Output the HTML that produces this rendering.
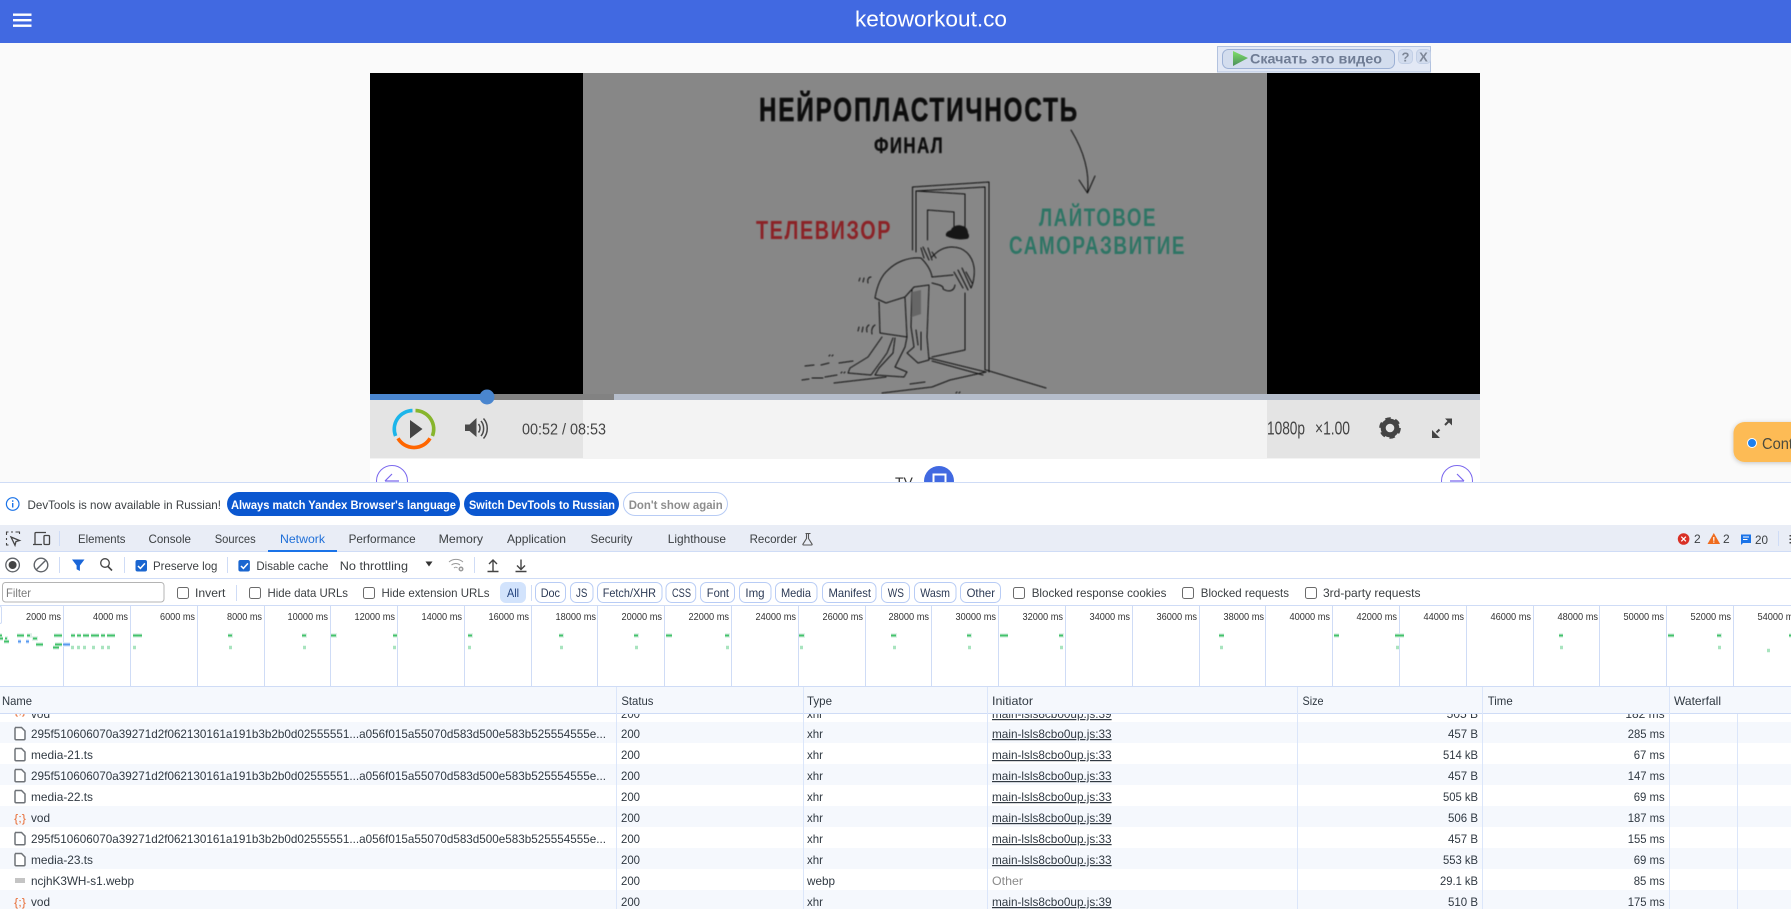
<!DOCTYPE html>
<html><head><meta charset="utf-8"><title>ketoworkout.co</title>
<style>
html,body{margin:0;padding:0;background:#fafafa;width:1791px;height:909px;overflow:hidden}
svg{position:absolute;left:0;top:0;display:block;font-family:"Liberation Sans","Noto Sans CJK JP",sans-serif}
.d{font-size:12px;fill:#3c4043}
.r{font-size:12px;fill:#303942}
.u{font-size:12px;fill:#303942;text-decoration:underline}
.e{text-anchor:end}
.b{font-size:12px;font-weight:bold;fill:#fff}
.c{font-size:12px;fill:#2c3a55}
.m{font-size:10.5px;fill:#333;text-anchor:end}
.g{shape-rendering:crispEdges}
.v{font-family:"Liberation Sans Narrow","Liberation Sans",sans-serif;font-weight:bold;letter-spacing:.08em}
</style></head><body>
<svg width="1791" height="909" viewBox="0 0 1791 909" xmlns="http://www.w3.org/2000/svg">
<defs>
<clipPath id="tb"><rect x="0" y="713" width="1791" height="196"/></clipPath>
<filter id="sh" x="-30%" y="-30%" width="160%" height="160%"><feDropShadow dx="0" dy="1" stdDeviation="2.5" flood-color="#000" flood-opacity=".22"/></filter>
<filter id="bl" x="-5%" y="-5%" width="110%" height="110%"><feGaussianBlur stdDeviation=".4"/></filter>
<linearGradient id="pl" x1="0" y1="0" x2="0" y2="1"><stop offset="0" stop-color="#7fe06a"/><stop offset="1" stop-color="#4b8f5a"/></linearGradient>
<path id="f" d="M0 0h6.5l3.5 3.5v7.5a1.2 1.2 0 0 1-1.2 1.2H1.2A1.2 1.2 0 0 1 0 11V1.2A1.2 1.2 0 0 1 1.2 0z" fill="#fff" stroke="#6f7378" stroke-width="1.5"/>
</defs>

<!-- page -->
<rect width="1791" height="909" fill="#fafafa"/>
<rect width="1791" height="43" fill="#4169e1"/>
<g fill="#fff"><rect x="13" y="13.5" width="18.5" height="2.4"/><rect x="13" y="19" width="18.5" height="2.4"/><rect x="13" y="24.5" width="18.5" height="2.4"/></g>
<text x="855" y="26.5" font-size="22" fill="#fff" textLength="152" lengthAdjust="spacingAndGlyphs">ketoworkout.co</text>

<!-- download bar -->
<rect x="1217.500" y="46.500" width="213" height="25.500" fill="#e2e8f5" stroke="#b2c2df"/>
<rect x="1222.500" y="49.500" width="172" height="19" rx="6" fill="#d3ddee" stroke="#9db1d5"/>
<path d="M1233 51l15 7-15 8z" fill="url(#pl)"/>
<text x="1250" y="63.500" font-size="13.500" font-weight="bold" fill="#6f7c94" textLength="132" lengthAdjust="spacingAndGlyphs">Скачать это видео</text>
<rect x="1398.500" y="49.500" width="14" height="14" rx="4" fill="#d2dcee" stroke="#c2cfe6"/>
<rect x="1416.500" y="49.500" width="14" height="14" rx="4" fill="#d2dcee" stroke="#c2cfe6"/>
<text x="1405.500" y="61.500" font-size="13" font-weight="bold" fill="#7e8797" text-anchor="middle">?</text>
<text x="1423.500" y="61.500" font-size="13" font-weight="bold" fill="#7e8797" text-anchor="middle">X</text>

<!-- video -->
<rect x="370" y="73" width="1110" height="321" fill="#000"/>
<rect x="583" y="73" width="684" height="321" fill="#878787"/>
<g filter="url(#bl)">
<text class="v" x="759" y="121" font-size="33" fill="#0b0b0b" stroke="#0b0b0b" stroke-width=".6" textLength="320" lengthAdjust="spacingAndGlyphs">НЕЙРОПЛАСТИЧНОСТЬ</text>
<text class="v" x="874" y="153" font-size="22" fill="#0b0b0b" stroke="#0b0b0b" stroke-width=".3" textLength="70" lengthAdjust="spacingAndGlyphs">ФИНАЛ</text>
<text class="v" x="756" y="239" font-size="26" fill="#8b2427" textLength="136" lengthAdjust="spacingAndGlyphs">ТЕЛЕВИЗОР</text>
<text class="v" x="1039" y="226" font-size="25" fill="#2f7565" textLength="118" lengthAdjust="spacingAndGlyphs">ЛАЙТОВОЕ</text>
<text class="v" x="1009" y="254" font-size="25" fill="#2f7565" textLength="177" lengthAdjust="spacingAndGlyphs">САМОРАЗВИТИЕ</text>
<g fill="none" stroke="#111" stroke-width="1" stroke-linecap="round" stroke-linejoin="round">
<path d="M1071 130C1082 148 1090 170 1087.500 193M1079 180l8.500 13 7.500-17"/>
<path d="M912.500 250V187L989 182V372M916 252V191L985 187V370"/>
<path d="M916 191L965 194V238M965 293V350L932 357"/>
<path d="M927.500 240V210L954 212V227"/>
<path d="M929 358L986 372M932 361L983 375M986 370L1046 388"/>
<!-- hair -->
<path d="M932 257C938 250 945 247 952 247C964 247 972 255 974 267C975 276 973 284 971 288"/>
<path d="M921 248L924 258M923 247L929 260M928 248L932 260M932 252L936 258"/>
<path d="M954 272L963 288M958 270L968 290M962 268L971 288M966 272L972 283"/>
<!-- back -->
<path d="M875 298C877 286 881 276 888 270C896 262 908 257 921 258C927 264 931 270 932 277"/>
<path d="M875 298L886 303L905 297L914 287L929 285"/>
<!-- face -->
<path d="M932 277L953 275M932 283C940 285 944 286 943 289C948 292 954 292 955 285"/>
<!-- shorts -->
<path d="M879 302L880 333L907 337L905 298"/>
<!-- arms -->
<path d="M912 290L911 327L914 347L907 353L918 363L929 360L927 337L929 286"/>
<path d="M916 330L918 345M921 332L921 350"/>
<!-- legs -->
<path d="M882 337L868 357L850 368L848 373L871 375L882 360L887 353L893 338"/>
<path d="M895 338L893 353L879 368L875 375L904 377L907 372L895 367L905 347L907 337"/>
<!-- floor -->
<path d="M805 366L814 365M821 365L829 363M839 363L853 361M802 380L809 379M812 378L823 378M825 377L837 375M834 383L860 380L886 377M882 393L932 387L950 380L986 372M910 384L925 382"/>
<path d="M859 281L860 278M863 282L864 278M868 283C867 279 869 277 871 277M858 331L859 327M862 332L863 327M867 332C866 328 867 326 869 325M872 334C871 329 873 326 875 325"/>
<path d="M829 356L830 355M832 356L833 355M841 373L842 372M844 373L845 372M956 393L957 392M959 393L960 392"/>
</g>
<path d="M946 236c-1-4 3-5 5-6 1-4 8-6 11-4 4 0 6 4 6 7 2 3 1 6-2 6-6 1-14 0-20-3z" fill="#151515"/>
<path d="M912 292l9-2v24l-9 3z" fill="#666"/>
</g>

<!-- controls -->
<rect x="370" y="400" width="1110" height="59" fill="#f3f3f3"/>
<rect x="370" y="400" width="213" height="58" fill="#e4e4e4"/>
<rect x="1267" y="400" width="213" height="58" fill="#e4e4e4"/>
<rect x="370" y="394" width="1110" height="6" fill="#b5bdcb"/>
<rect x="370" y="394" width="244" height="6" fill="#828282"/>
<rect x="370" y="394" width="117" height="6" fill="#4a86cf"/>
<circle cx="487" cy="397" r="7.500" fill="#4a86cf"/>
<g fill="none" stroke-width="3.600">
<path d="M395.600 436A18.500 18.500 0 0 1 412.500 410.600" stroke="#1cb5ea"/>
<path d="M415.500 410.600A18.500 18.500 0 0 1 432.400 436" stroke="#87b52c"/>
<path d="M430 438.300A18.500 18.500 0 0 1 398 438.300" stroke="#ff6600"/>
</g>
<path d="M410 420l12.500 9-12.500 9.500z" fill="#444"/>
<path d="M465 424.500h4.500l7-6.500v19l-7-6h-4.500z" fill="#4a4a4a"/>
<g fill="none" stroke="#4a4a4a" stroke-width="1.500"><path d="M478.500 424c2 2.500 2 6 0 8.500"/><path d="M481 421c3.500 4 3.500 11 0 15"/><path d="M483.500 418.500c5 5.500 5 14.500 0 20"/></g>
<text x="522" y="434.500" font-size="15.500" fill="#444" textLength="84" lengthAdjust="spacingAndGlyphs">00:52 / 08:53</text>
<text x="1267" y="434.500" font-size="18" fill="#444" textLength="38" lengthAdjust="spacingAndGlyphs">1080p</text>
<text x="1315" y="434.500" font-size="18" fill="#444" textLength="35" lengthAdjust="spacingAndGlyphs">×1.00</text>
<circle cx="1390" cy="428" r="6.800" fill="none" stroke="#444" stroke-width="5"/>
<circle cx="1390" cy="428" r="9.600" fill="none" stroke="#444" stroke-width="2.400" stroke-dasharray="5.500 4.550"/>
<path d="M1445 425l4-4" stroke="#444" stroke-width="2" fill="none"/>
<path d="M1445 418.500h7v7z" fill="#444"/>
<path d="M1436.500 432.500l3-3" stroke="#444" stroke-width="2" fill="none"/>
<path d="M1432 430v8h8z" fill="#444"/>

<!-- contact -->
<rect x="1733.500" y="422" width="80" height="40" rx="11" fill="#fdbb55" filter="url(#sh)"/>
<circle cx="1752" cy="443" r="4.500" fill="#1a7ff0" stroke="#fff" stroke-width="1"/>
<text x="1762" y="449" font-size="16" fill="#4a4a3f" textLength="31" lengthAdjust="spacingAndGlyphs">Cont</text>

<!-- panel under the player -->
<rect x="370" y="459" width="1110" height="24" fill="#fff"/>
<circle cx="392" cy="481" r="15.500" fill="#fff" stroke="#7b68ee" stroke-width="1"/>
<path d="M399 481H385M392 474l-7 7" fill="none" stroke="#7b68ee" stroke-width="1.200"/>
<circle cx="1457" cy="481" r="15.500" fill="#fff" stroke="#7b68ee" stroke-width="1"/>
<path d="M1450 481H1464M1457 474l7 7" fill="none" stroke="#7b68ee" stroke-width="1.200"/>
<text x="895" y="487" font-size="14" fill="#333">TV</text>
<circle cx="939" cy="481" r="15" fill="#4169e1"/>
<rect x="933.500" y="474.500" width="12" height="12" fill="none" stroke="#fff" stroke-width="2"/>

<!-- DEVTOOLS -->
<rect x="0" y="482" width="1791" height="427" fill="#fff"/>
<rect x="0" y="482" width="1791" height="1" fill="#cfdcf6"/>

<!-- info bar -->
<circle cx="12.700" cy="504" r="6.300" fill="#fff" stroke="#1a73e8" stroke-width="1.200"/>
<rect x="12" y="503" width="1.400" height="4.500" fill="#1a73e8"/><rect x="12" y="500.300" width="1.400" height="1.500" fill="#1a73e8"/>
<text class="d" x="27.500" y="509" textLength="193.500" lengthAdjust="spacingAndGlyphs">DevTools is now available in Russian!</text>
<rect x="227" y="492" width="233" height="24" rx="12" fill="#0b57d0"/>
<text class="b" x="231" y="509" textLength="225" lengthAdjust="spacingAndGlyphs">Always match Yandex Browser's language</text>
<rect x="464" y="492" width="155" height="24" rx="12" fill="#0b57d0"/>
<text class="b" x="469" y="509" textLength="146" lengthAdjust="spacingAndGlyphs">Switch DevTools to Russian</text>
<rect x="623.500" y="492.500" width="104" height="23" rx="11.500" fill="#fff" stroke="#b8ccf5"/>
<text x="628.700" y="509" font-size="12" font-weight="bold" fill="#8d8d8d" textLength="94" lengthAdjust="spacingAndGlyphs">Don't show again</text>

<!-- tabs -->
<rect x="0" y="525" width="1791" height="26" fill="#e9edf6"/>
<rect x="0" y="551" width="1791" height="1" fill="#cfdcf6"/>
<g fill="none" stroke="#444" stroke-width="1.100">
<path d="M6.500 535v-3h2M11 532h2M15.500 532h4v2M6.500 538v2M6.500 543v2h2"/>
<path d="M11 537l8.500 3.500-3.500 1 -1 3.800z" stroke-width="1.300"/>
<path d="M35 544.500v-11a1 1 0 0 1 1-1h10M33 544.500h9" stroke-width="1.300"/>
<rect x="44" y="535.500" width="5.500" height="9" rx="1" stroke-width="1.300"/>
</g>
<rect x="59" y="531" width="1" height="15" fill="#cfdcf6"/>
<g class="d">
<text x="78" y="543" textLength="47.500" lengthAdjust="spacingAndGlyphs">Elements</text>
<text x="148.500" y="543" textLength="42.500" lengthAdjust="spacingAndGlyphs">Console</text>
<text x="214.700" y="543" textLength="41" lengthAdjust="spacingAndGlyphs">Sources</text>
<text x="280" y="543" textLength="45" lengthAdjust="spacingAndGlyphs" style="fill:#1f6fd8">Network</text>
<text x="348.600" y="543" textLength="67" lengthAdjust="spacingAndGlyphs">Performance</text>
<text x="438.600" y="543" textLength="44.500" lengthAdjust="spacingAndGlyphs">Memory</text>
<text x="507" y="543" textLength="59" lengthAdjust="spacingAndGlyphs">Application</text>
<text x="590.500" y="543" textLength="42" lengthAdjust="spacingAndGlyphs">Security</text>
<text x="667.700" y="543" textLength="58.300" lengthAdjust="spacingAndGlyphs">Lighthouse</text>
<text x="749.600" y="543" textLength="47.400" lengthAdjust="spacingAndGlyphs">Recorder</text>
</g>
<rect x="268" y="550" width="69" height="2" fill="#1a73e8"/>
<path d="M805.500 533.500h5M806.500 533.500v5l-3.500 5.500a.6.6 0 0 0 .5 1h8a.6.6 0 0 0 .5-1l-3.500-5.500v-5" fill="none" stroke="#555" stroke-width="1.100"/>
<circle cx="1683.600" cy="539" r="5.800" fill="#d93025"/><path d="M1681.300 536.700l4.600 4.600M1685.900 536.700l-4.600 4.600" stroke="#fff" stroke-width="1.200"/>
<text class="d" x="1694" y="543">2</text>
<path d="M1713.800 533l6.300 11h-12.600z" fill="#ef6c1f"/><rect x="1713.200" y="537" width="1.200" height="3.800" fill="#fff"/><rect x="1713.200" y="541.500" width="1.200" height="1.200" fill="#fff"/>
<text class="d" x="1723" y="543">2</text>
<path d="M1741 534.500h10v8.500h-8l-2 2z" fill="#1a73e8"/><path d="M1743 537h6M1743 539.500h4.500" stroke="#fff" stroke-width="1"/>
<text class="d" x="1755" y="544" textLength="13" lengthAdjust="spacingAndGlyphs">20</text>
<rect x="1778" y="531" width="1" height="15" fill="#cfdcf6"/>
<g fill="#444"><rect x="1789.500" y="535" width="1.500" height="1.500"/><rect x="1789.500" y="538.500" width="1.500" height="1.500"/><rect x="1789.500" y="542" width="1.500" height="1.500"/></g>

<!-- toolbar -->
<rect x="0" y="578" width="1791" height="1" fill="#cfdcf6"/>
<circle cx="12.600" cy="565" r="6.800" fill="none" stroke="#5f6368" stroke-width="1.300"/><circle cx="12.600" cy="565" r="4" fill="#444"/>
<circle cx="41" cy="565" r="6.800" fill="none" stroke="#5f6368" stroke-width="1.400"/><path d="M36 570l10-10" stroke="#5f6368" stroke-width="1.400"/>
<rect x="59" y="557" width="1" height="16" fill="#cfdcf6"/>
<path d="M72 559.500h12.500l-4.600 6v5.500l-3.300-1.700v-3.800z" fill="#1a66d8"/>
<circle cx="105" cy="563" r="4.300" fill="none" stroke="#444" stroke-width="1.300"/><path d="M108 566.500l4 4" stroke="#444" stroke-width="1.600"/>
<rect x="124" y="557" width="1" height="16" fill="#cfdcf6"/>
<rect x="135.500" y="560" width="11.500" height="11.500" rx="2" fill="#1a66d0"/><path d="M138 566l2.400 2.400 4.500-5" fill="none" stroke="#fff" stroke-width="1.500"/>
<text class="d" x="153" y="570" textLength="64.400" lengthAdjust="spacingAndGlyphs">Preserve log</text>
<rect x="227" y="557" width="1" height="16" fill="#cfdcf6"/>
<rect x="238.400" y="560" width="11.500" height="11.500" rx="2" fill="#1a66d0"/><path d="M241 566l2.400 2.400 4.500-5" fill="none" stroke="#fff" stroke-width="1.500"/>
<text class="d" x="256.400" y="570" textLength="72" lengthAdjust="spacingAndGlyphs">Disable cache</text>
<text class="d" x="339.800" y="570" textLength="68.200" lengthAdjust="spacingAndGlyphs">No throttling</text>
<path d="M425.500 561.500h7l-3.500 5z" fill="#333"/>
<g fill="none" stroke="#9a9a9a" stroke-width="1"><path d="M449 562c4-3.500 10-3.500 14 0"/><path d="M451.500 565c2.500-2 6-2 8.500 0"/><path d="M454 568c1-1 2.500-1 3.500 0"/></g>
<circle cx="461" cy="569" r="2.500" fill="#9a9a9a"/><circle cx="461" cy="569" r="1" fill="#fff"/>
<rect x="474" y="557" width="1" height="16" fill="#cfdcf6"/>
<path d="M493 571V560.500M489 564l4-4 4 4M487.500 571.500h11" fill="none" stroke="#444" stroke-width="1.400"/>
<path d="M521 559.500V569M517 565.500l4 4 4-4M515.500 571.500h11" fill="none" stroke="#444" stroke-width="1.400"/>

<!-- filter row -->
<rect x="0" y="605" width="1791" height="1" fill="#cfdcf6"/>
<rect x="2.500" y="582.500" width="161.500" height="19.500" rx="3" fill="#fff" stroke="#b4b4b4"/>
<text x="6" y="597" font-size="12" fill="#7b7b7b" textLength="25" lengthAdjust="spacingAndGlyphs">Filter</text>
<g fill="#fff" stroke="#6b6b6b">
<rect x="177.500" y="587.500" width="11" height="11" rx="2"/>
<rect x="249.500" y="587.500" width="11" height="11" rx="2"/>
<rect x="363.500" y="587.500" width="11" height="11" rx="2"/>
<rect x="1013.500" y="587.500" width="11" height="11" rx="2"/>
<rect x="1182.500" y="587.500" width="11" height="11" rx="2"/>
<rect x="1305.500" y="587.500" width="11" height="11" rx="2"/>
</g>
<g class="d">
<text x="195" y="597" textLength="30.400" lengthAdjust="spacingAndGlyphs">Invert</text>
<text x="267.500" y="597" textLength="80.500" lengthAdjust="spacingAndGlyphs">Hide data URLs</text>
<text x="381.500" y="597" textLength="108" lengthAdjust="spacingAndGlyphs">Hide extension URLs</text>
<text x="1031.700" y="597" textLength="134.700" lengthAdjust="spacingAndGlyphs">Blocked response cookies</text>
<text x="1200.800" y="597" textLength="88.200" lengthAdjust="spacingAndGlyphs">Blocked requests</text>
<text x="1323" y="597" textLength="97.500" lengthAdjust="spacingAndGlyphs">3rd-party requests</text>
</g>
<rect x="236" y="585" width="1" height="16" fill="#cfdcf6"/>
<rect x="531" y="585" width="1" height="16" fill="#cfdcf6"/>
<rect x="500" y="582" width="26" height="21" rx="6" fill="#d2e3fc"/>
<text x="507" y="597" font-size="12" fill="#1f3f7a" textLength="12" lengthAdjust="spacingAndGlyphs">All</text>
<g fill="#fff" stroke="#b8ccf5">
<rect x="535.500" y="582.500" width="30" height="20" rx="6"/>
<rect x="570.500" y="582.500" width="22.500" height="20" rx="6"/>
<rect x="597.500" y="582.500" width="64.500" height="20" rx="6"/>
<rect x="666" y="582.500" width="29.700" height="20" rx="6"/>
<rect x="700.500" y="582.500" width="34" height="20" rx="6"/>
<rect x="739.500" y="582.500" width="31.500" height="20" rx="6"/>
<rect x="775.500" y="582.500" width="41.500" height="20" rx="6"/>
<rect x="822.500" y="582.500" width="53.500" height="20" rx="6"/>
<rect x="881.500" y="582.500" width="28" height="20" rx="6"/>
<rect x="914.500" y="582.500" width="41.500" height="20" rx="6"/>
<rect x="960.500" y="582.500" width="40" height="20" rx="6"/>
</g>
<g class="c">
<text x="540.700" y="597" textLength="19.300" lengthAdjust="spacingAndGlyphs">Doc</text>
<text x="576" y="597" textLength="11.400" lengthAdjust="spacingAndGlyphs">JS</text>
<text x="602.700" y="597" textLength="53.300" lengthAdjust="spacingAndGlyphs">Fetch/XHR</text>
<text x="672" y="597" textLength="19" lengthAdjust="spacingAndGlyphs">CSS</text>
<text x="706.800" y="597" textLength="22.200" lengthAdjust="spacingAndGlyphs">Font</text>
<text x="745.400" y="597" textLength="19.200" lengthAdjust="spacingAndGlyphs">Img</text>
<text x="781" y="597" textLength="30" lengthAdjust="spacingAndGlyphs">Media</text>
<text x="828.500" y="597" textLength="42.500" lengthAdjust="spacingAndGlyphs">Manifest</text>
<text x="887.800" y="597" textLength="16.200" lengthAdjust="spacingAndGlyphs">WS</text>
<text x="920.300" y="597" textLength="29.700" lengthAdjust="spacingAndGlyphs">Wasm</text>
<text x="966.600" y="597" textLength="28.400" lengthAdjust="spacingAndGlyphs">Other</text>
</g>

<!-- timeline -->
<path class="g" d="M63.500 606v80M130.500 606v80M197.500 606v80M264.500 606v80M330.500 606v80M397.500 606v80M464.500 606v80M531.500 606v80M597.500 606v80M664.500 606v80M731.500 606v80M798.500 606v80M865.500 606v80M931.500 606v80M998.500 606v80M1065.500 606v80M1132.500 606v80M1199.500 606v80M1265.500 606v80M1332.500 606v80M1399.500 606v80M1466.500 606v80M1533.500 606v80M1599.500 606v80M1666.500 606v80M1733.500 606v80" stroke="#cfdcf6" fill="none"/>
<rect x="-2" y="606.500" width="3.500" height="17" rx="1.500" fill="#fff" stroke="#cfdcf6"/>
<g>
<text class="m" x="61" y="620" textLength="35" lengthAdjust="spacingAndGlyphs">2000 ms</text>
<text class="m" x="128" y="620" textLength="35" lengthAdjust="spacingAndGlyphs">4000 ms</text>
<text class="m" x="195" y="620" textLength="35" lengthAdjust="spacingAndGlyphs">6000 ms</text>
<text class="m" x="262" y="620" textLength="35" lengthAdjust="spacingAndGlyphs">8000 ms</text>
<text class="m" x="328" y="620" textLength="40.500" lengthAdjust="spacingAndGlyphs">10000 ms</text>
<text class="m" x="395" y="620" textLength="40.500" lengthAdjust="spacingAndGlyphs">12000 ms</text>
<text class="m" x="462" y="620" textLength="40.500" lengthAdjust="spacingAndGlyphs">14000 ms</text>
<text class="m" x="529" y="620" textLength="40.500" lengthAdjust="spacingAndGlyphs">16000 ms</text>
<text class="m" x="596" y="620" textLength="40.500" lengthAdjust="spacingAndGlyphs">18000 ms</text>
<text class="m" x="662" y="620" textLength="40.500" lengthAdjust="spacingAndGlyphs">20000 ms</text>
<text class="m" x="729" y="620" textLength="40.500" lengthAdjust="spacingAndGlyphs">22000 ms</text>
<text class="m" x="796" y="620" textLength="40.500" lengthAdjust="spacingAndGlyphs">24000 ms</text>
<text class="m" x="863" y="620" textLength="40.500" lengthAdjust="spacingAndGlyphs">26000 ms</text>
<text class="m" x="929" y="620" textLength="40.500" lengthAdjust="spacingAndGlyphs">28000 ms</text>
<text class="m" x="996" y="620" textLength="40.500" lengthAdjust="spacingAndGlyphs">30000 ms</text>
<text class="m" x="1063" y="620" textLength="40.500" lengthAdjust="spacingAndGlyphs">32000 ms</text>
<text class="m" x="1130" y="620" textLength="40.500" lengthAdjust="spacingAndGlyphs">34000 ms</text>
<text class="m" x="1197" y="620" textLength="40.500" lengthAdjust="spacingAndGlyphs">36000 ms</text>
<text class="m" x="1264" y="620" textLength="40.500" lengthAdjust="spacingAndGlyphs">38000 ms</text>
<text class="m" x="1330" y="620" textLength="40.500" lengthAdjust="spacingAndGlyphs">40000 ms</text>
<text class="m" x="1397" y="620" textLength="40.500" lengthAdjust="spacingAndGlyphs">42000 ms</text>
<text class="m" x="1464" y="620" textLength="40.500" lengthAdjust="spacingAndGlyphs">44000 ms</text>
<text class="m" x="1531" y="620" textLength="40.500" lengthAdjust="spacingAndGlyphs">46000 ms</text>
<text class="m" x="1598" y="620" textLength="40.500" lengthAdjust="spacingAndGlyphs">48000 ms</text>
<text class="m" x="1664" y="620" textLength="40.500" lengthAdjust="spacingAndGlyphs">50000 ms</text>
<text class="m" x="1731" y="620" textLength="40.500" lengthAdjust="spacingAndGlyphs">52000 ms</text>
<text class="m" x="1798" y="620" textLength="40.500" lengthAdjust="spacingAndGlyphs">54000 ms</text>
</g>
<!-- bars -->
<path d="M17 635.500h7M27 635.500h5M54 635.500h8M71 635.500h4M77 635.500h4M83 635.500h6M91 635.500h8M101 635.500h4M107 635.500h8M133 635.500h9M228 635.500h5M302 635.500h5M331 635.500h6M393 635.500h5M468 635.500h5M559 635.500h5M634 635.500h5M666 635.500h6M725 635.500h5M799 635.500h6M891 635.500h6M967 635.500h5M1000 635.500h8M1059 635.500h5M1219 635.500h5M1334 635.500h5M1395 635.500h9M1559 635.500h4M1668 635.500h6M1717 635.500h5M1789 635.500h2M0 635.500h2M0 638.500h3M5 638.500h3M32 638.500h6M4 641.500h5M36 644.500h7M55 644.500h7M53 647.500h6" stroke="#dcefe6" stroke-width="4.500" fill="none"/>
<path d="M17 635.500h7M27 635.500h3M54 635.500h8M71 635.500h4M77 635.500h4M83 635.500h6M91 635.500h8M101 635.500h4M107 635.500h8M133 635.500h9M228 635.500h4M302 635.500h4M331 635.500h5M393 635.500h4M468 635.500h4M559 635.500h4M634 635.500h4M666 635.500h6M725 635.500h4M799 635.500h5M891 635.500h5M967 635.500h4M1000 635.500h8M1059 635.500h4M1219 635.500h5M1334 635.500h5M1395 635.500h9M1559 635.500h4M1668 635.500h6M1717 635.500h4M1789 635.500h2M0 635.500h2M0 638.500h3M5 638.500h2M33 638.500h4M4 641.500h5M36 644.500h7M55 644.500h7M53 647.500h6" stroke="#43c36b" stroke-width="2" fill="none"/>
<path d="M18 641.500h3M26 641.500h3M63 644.500h7" stroke="#dbe9fb" stroke-width="4.500" fill="none"/>
<path d="M18 641.500h3M26 641.500h3M63 644.500h7" stroke="#5a9bf0" stroke-width="2" fill="none"/>
<path d="M71 647.500h3M77 647.500h3M83 647.500h3M92 647.500h3M101 647.500h3M107 647.500h3M133 647.500h3M229 647.500h3M303 647.500h3M393 647.500h3M468 647.500h3M560 647.500h3M635 647.500h3M726 647.500h3M800 647.500h3M893 647.500h3M968 647.500h3M1060 647.500h3M1220 647.500h3M1396 647.500h3M1560 647.500h3M1718 647.500h3M1767 650.500h3" stroke="#a9e4bf" stroke-width="3.500" fill="none"/>

<!-- table -->
<g clip-path="url(#tb)">
<g fill="#f5f8fd" class="g">
<rect x="0" y="722" width="1791" height="21"/>
<rect x="0" y="764" width="1791" height="21"/>
<rect x="0" y="806" width="1791" height="21"/>
<rect x="0" y="848" width="1791" height="21"/>
<rect x="0" y="890" width="1791" height="19"/>
</g>
<g>
<!-- partial row -->
<text x="14" y="714" font-size="11" fill="#e8703a" textLength="12" lengthAdjust="spacingAndGlyphs">{;}</text>
<text class="r" x="31" y="718" textLength="19" lengthAdjust="spacingAndGlyphs">vod</text>
<text class="r" x="621" y="718" textLength="19" lengthAdjust="spacingAndGlyphs">200</text>
<text class="r" x="807" y="718" textLength="16" lengthAdjust="spacingAndGlyphs">xhr</text>
<text class="u" x="992" y="718" textLength="119.600" lengthAdjust="spacingAndGlyphs">main-lsls8cbo0up.js:39</text>
<text class="r e" x="1478" y="718">505 B</text>
<text class="r e" x="1664.700" y="718">182 ms</text>

<!-- row 1 -->
<use href="#f" x="15" y="727.500"/>
<text class="r" x="31" y="738" textLength="575" lengthAdjust="spacingAndGlyphs">295f510606070a39271d2f062130161a191b3b2b0d02555551...a056f015a55070d583d500e583b525554555e...</text>
<text class="r" x="621" y="738" textLength="19" lengthAdjust="spacingAndGlyphs">200</text>
<text class="r" x="807" y="738" textLength="16" lengthAdjust="spacingAndGlyphs">xhr</text>
<text class="u" x="992" y="738" textLength="119.600" lengthAdjust="spacingAndGlyphs">main-lsls8cbo0up.js:33</text>
<text class="r e" x="1478" y="738" textLength="30" lengthAdjust="spacingAndGlyphs">457 B</text>
<text class="r e" x="1664.700" y="738" textLength="37" lengthAdjust="spacingAndGlyphs">285 ms</text>

<!-- row 2 -->
<use href="#f" x="15" y="748.500"/>
<text class="r" x="31" y="759" textLength="62" lengthAdjust="spacingAndGlyphs">media-21.ts</text>
<text class="r" x="621" y="759" textLength="19" lengthAdjust="spacingAndGlyphs">200</text>
<text class="r" x="807" y="759" textLength="16" lengthAdjust="spacingAndGlyphs">xhr</text>
<text class="u" x="992" y="759" textLength="119.600" lengthAdjust="spacingAndGlyphs">main-lsls8cbo0up.js:33</text>
<text class="r e" x="1478" y="759" textLength="35" lengthAdjust="spacingAndGlyphs">514 kB</text>
<text class="r e" x="1664.700" y="759" textLength="31" lengthAdjust="spacingAndGlyphs">67 ms</text>

<!-- row 3 -->
<use href="#f" x="15" y="769.500"/>
<text class="r" x="31" y="780" textLength="575" lengthAdjust="spacingAndGlyphs">295f510606070a39271d2f062130161a191b3b2b0d02555551...a056f015a55070d583d500e583b525554555e...</text>
<text class="r" x="621" y="780" textLength="19" lengthAdjust="spacingAndGlyphs">200</text>
<text class="r" x="807" y="780" textLength="16" lengthAdjust="spacingAndGlyphs">xhr</text>
<text class="u" x="992" y="780" textLength="119.600" lengthAdjust="spacingAndGlyphs">main-lsls8cbo0up.js:33</text>
<text class="r e" x="1478" y="780" textLength="30" lengthAdjust="spacingAndGlyphs">457 B</text>
<text class="r e" x="1664.700" y="780" textLength="37" lengthAdjust="spacingAndGlyphs">147 ms</text>

<!-- row 4 -->
<use href="#f" x="15" y="790.500"/>
<text class="r" x="31" y="801" textLength="62" lengthAdjust="spacingAndGlyphs">media-22.ts</text>
<text class="r" x="621" y="801" textLength="19" lengthAdjust="spacingAndGlyphs">200</text>
<text class="r" x="807" y="801" textLength="16" lengthAdjust="spacingAndGlyphs">xhr</text>
<text class="u" x="992" y="801" textLength="119.600" lengthAdjust="spacingAndGlyphs">main-lsls8cbo0up.js:33</text>
<text class="r e" x="1478" y="801" textLength="35" lengthAdjust="spacingAndGlyphs">505 kB</text>
<text class="r e" x="1664.700" y="801" textLength="31" lengthAdjust="spacingAndGlyphs">69 ms</text>

<!-- row 5 -->
<text x="14" y="822" font-size="11" fill="#e8703a" textLength="12" lengthAdjust="spacingAndGlyphs">{;}</text>
<text class="r" x="31" y="822" textLength="19" lengthAdjust="spacingAndGlyphs">vod</text>
<text class="r" x="621" y="822" textLength="19" lengthAdjust="spacingAndGlyphs">200</text>
<text class="r" x="807" y="822" textLength="16" lengthAdjust="spacingAndGlyphs">xhr</text>
<text class="u" x="992" y="822" textLength="119.600" lengthAdjust="spacingAndGlyphs">main-lsls8cbo0up.js:39</text>
<text class="r e" x="1478" y="822" textLength="30" lengthAdjust="spacingAndGlyphs">506 B</text>
<text class="r e" x="1664.700" y="822" textLength="37" lengthAdjust="spacingAndGlyphs">187 ms</text>

<!-- row 6 -->
<use href="#f" x="15" y="832.500"/>
<text class="r" x="31" y="843" textLength="575" lengthAdjust="spacingAndGlyphs">295f510606070a39271d2f062130161a191b3b2b0d02555551...a056f015a55070d583d500e583b525554555e...</text>
<text class="r" x="621" y="843" textLength="19" lengthAdjust="spacingAndGlyphs">200</text>
<text class="r" x="807" y="843" textLength="16" lengthAdjust="spacingAndGlyphs">xhr</text>
<text class="u" x="992" y="843" textLength="119.600" lengthAdjust="spacingAndGlyphs">main-lsls8cbo0up.js:33</text>
<text class="r e" x="1478" y="843" textLength="30" lengthAdjust="spacingAndGlyphs">457 B</text>
<text class="r e" x="1664.700" y="843" textLength="37" lengthAdjust="spacingAndGlyphs">155 ms</text>

<!-- row 7 -->
<use href="#f" x="15" y="853.500"/>
<text class="r" x="31" y="864" textLength="62" lengthAdjust="spacingAndGlyphs">media-23.ts</text>
<text class="r" x="621" y="864" textLength="19" lengthAdjust="spacingAndGlyphs">200</text>
<text class="r" x="807" y="864" textLength="16" lengthAdjust="spacingAndGlyphs">xhr</text>
<text class="u" x="992" y="864" textLength="119.600" lengthAdjust="spacingAndGlyphs">main-lsls8cbo0up.js:33</text>
<text class="r e" x="1478" y="864" textLength="35" lengthAdjust="spacingAndGlyphs">553 kB</text>
<text class="r e" x="1664.700" y="864" textLength="31" lengthAdjust="spacingAndGlyphs">69 ms</text>

<!-- row 8 -->
<rect x="15" y="878" width="10" height="5" fill="#c4c4c4"/>
<text class="r" x="31" y="885" textLength="103" lengthAdjust="spacingAndGlyphs">ncjhK3WH-s1.webp</text>
<text class="r" x="621" y="885" textLength="19" lengthAdjust="spacingAndGlyphs">200</text>
<text class="r" x="807" y="885" textLength="28" lengthAdjust="spacingAndGlyphs">webp</text>
<text x="992" y="885" font-size="12" fill="#8a8a8a" textLength="31" lengthAdjust="spacingAndGlyphs">Other</text>
<text class="r e" x="1478" y="885" textLength="38" lengthAdjust="spacingAndGlyphs">29.1 kB</text>
<text class="r e" x="1664.700" y="885" textLength="31" lengthAdjust="spacingAndGlyphs">85 ms</text>

<!-- row 9 -->
<text x="14" y="906" font-size="11" fill="#e8703a" textLength="12" lengthAdjust="spacingAndGlyphs">{;}</text>
<text class="r" x="31" y="906" textLength="19" lengthAdjust="spacingAndGlyphs">vod</text>
<text class="r" x="621" y="906" textLength="19" lengthAdjust="spacingAndGlyphs">200</text>
<text class="r" x="807" y="906" textLength="16" lengthAdjust="spacingAndGlyphs">xhr</text>
<text class="u" x="992" y="906" textLength="119.600" lengthAdjust="spacingAndGlyphs">main-lsls8cbo0up.js:39</text>
<text class="r e" x="1478" y="906" textLength="30" lengthAdjust="spacingAndGlyphs">510 B</text>
<text class="r e" x="1664.700" y="906" textLength="37" lengthAdjust="spacingAndGlyphs">175 ms</text>
</g>
</g>
<!-- table header -->
<rect x="0" y="686" width="1791" height="1" fill="#cfdcf6"/>
<rect x="0" y="687" width="1791" height="26" fill="#f5f8fd"/>
<rect x="0" y="713" width="1791" height="1" fill="#cfdcf6"/>
<path class="g" d="M616.500 687V909M803.500 687V909M987.500 687V909M1297.500 687V909M1482.500 687V909M1669.500 687V909M1737.500 714V909" stroke="#dbe6fa" fill="none"/>
<g class="r">
<text x="2" y="705" textLength="30" lengthAdjust="spacingAndGlyphs">Name</text>
<text x="621.400" y="705" textLength="32" lengthAdjust="spacingAndGlyphs">Status</text>
<text x="807" y="705" textLength="25" lengthAdjust="spacingAndGlyphs">Type</text>
<text x="992" y="705" textLength="41" lengthAdjust="spacingAndGlyphs">Initiator</text>
<text x="1302.500" y="705" textLength="21" lengthAdjust="spacingAndGlyphs">Size</text>
<text x="1487.700" y="705" textLength="25" lengthAdjust="spacingAndGlyphs">Time</text>
<text x="1674" y="705" textLength="47" lengthAdjust="spacingAndGlyphs">Waterfall</text>
</g>
</svg>
</body></html>
